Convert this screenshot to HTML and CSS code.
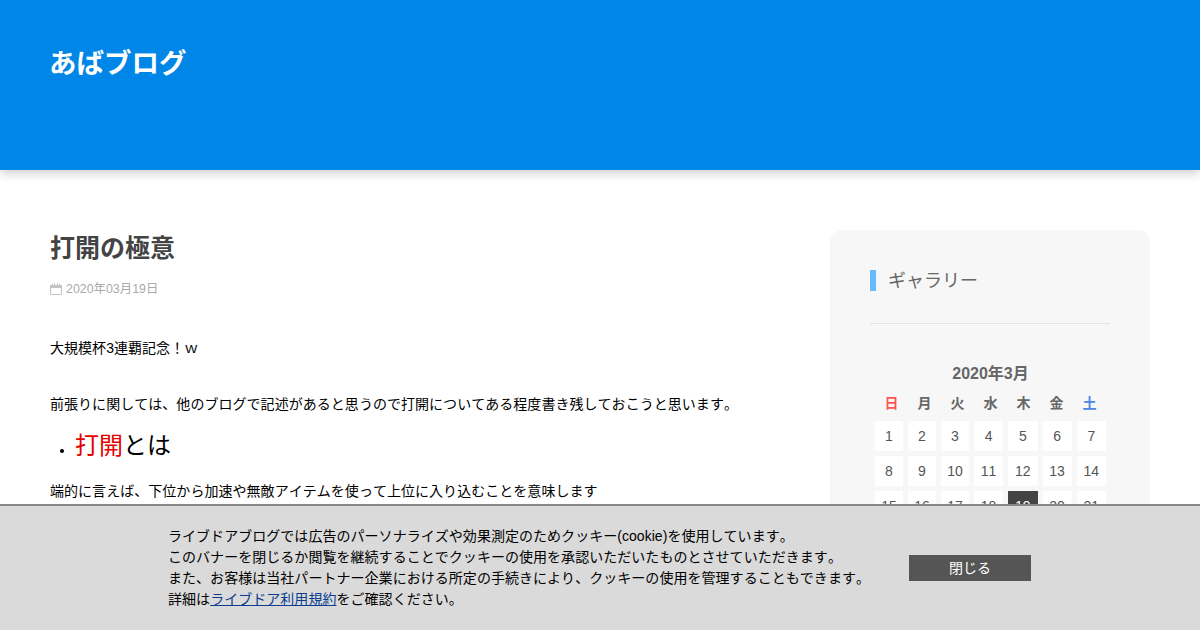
FILE: index.html
```html
<!DOCTYPE html>
<html lang="ja">
<head>
    <meta charset="UTF-8">
    <meta name="viewport" content="width=device-width, initial-scale=1.0">
    <title>あばブログ</title>
    <link rel="stylesheet" href="styles.css">
</head>
<body>
    <header class="site-header">
        <h1 class="site-title">あばブログ</h1>
    </header>

    <div class="content">
        <main class="article">
            <h2 class="article-title">打開の極意</h2>
            <div class="article-date">
                <svg class="date-icon" width="12" height="12" viewBox="0 0 12 12">
                    <path d="M0.5 2.5h11v9h-11z" fill="none" stroke="#c4c4c4"/>
                    <path d="M0 2h12v3H0z" fill="#c4c4c4"/>
                    <path d="M2.5 0.5v2M4.5 0.5v2M7.5 0.5v2M9.5 0.5v2" stroke="#c4c4c4"/>
                </svg>
                <span>2020年03月19日</span>
            </div>
            <div class="article-body">
                <p class="lead">大規模杯3連覇記念！ｗ</p>
                <p>前張りに関しては、他のブログで記述があると思うので打開についてある程度書き残しておこうと思います。</p>
                <ul class="topic-list">
                    <li><span class="red">打開</span>とは</li>
                </ul>
                <p>端的に言えば、下位から加速や無敵アイテムを使って上位に入り込むことを意味します</p>
            </div>
        </main>

        <aside class="sidebar">
            <div class="widget-head">
                <h3 class="widget-title">ギャラリー</h3>
            </div>
            <table class="calendar">
                <caption>2020年3月</caption>
                <thead>
                    <tr>
                        <th colspan="7">
                            <div class="weekdays">
                                <span class="sun">日</span><span>月</span><span>火</span><span>水</span><span>木</span><span>金</span><span class="sat">土</span>
                            </div>
                        </th>
                    </tr>
                </thead>
                <tbody>
                    <tr><td class="narrow">1</td><td class="narrow">2</td><td class="narrow">3</td><td>4</td><td>5</td><td>6</td><td>7</td></tr>
                    <tr><td>8</td><td>9</td><td>10</td><td>11</td><td>12</td><td>13</td><td>14</td></tr>
                    <tr><td>15</td><td>16</td><td>17</td><td>18</td><td class="today">19</td><td>20</td><td>21</td></tr>
                    <tr><td>22</td><td>23</td><td>24</td><td>25</td><td>26</td><td>27</td><td>28</td></tr>
                </tbody>
            </table>
        </aside>
    </div>

    <div class="cookie-banner">
        <div class="cookie-inner">
            <p class="cookie-text">
                ライブドアブログでは広告のパーソナライズや効果測定のためクッキー(cookie)を使用しています。<br>
                このバナーを閉じるか閲覧を継続することでクッキーの使用を承認いただいたものとさせていただきます。<br>
                また、お客様は当社パートナー企業における所定の手続きにより、クッキーの使用を管理することもできます。<br>
                詳細は<a href="#">ライブドア利用規約</a>をご確認ください。
            </p>
            <button class="cookie-close" type="button">閉じる</button>
        </div>
    </div>
</body>
</html>
```

FILE: styles.css
```css
html, body {
    height: 630px;
    overflow: hidden;
}
body {
    font-family: "Liberation Sans", "Noto Sans CJK JP", sans-serif;
    margin: 0;
    padding: 0;
    background-color: #ffffff;
    color: #000;
    font-size: 14px;
    font-kerning: none;
    text-spacing-trim: space-all;
}
.site-header {
    height: 170px;
    box-sizing: border-box;
    padding: 46px 49px 0;
    background-color: #0086e6;
    box-shadow: 0 3px 10px rgba(0, 0, 0, 0.2);
}
.site-title {
    margin: 0;
    font-size: 27.5px;
    line-height: 36px;
    font-weight: bold;
    color: #fff;
}
.content {
    display: flex;
    justify-content: space-between;
    align-items: flex-start;
    padding: 60px 50px 0;
}
.article {
    width: 730px;
}
.article-title {
    margin: 0;
    font-size: 25px;
    line-height: 36px;
    font-weight: bold;
    color: #444;
}
.article-date {
    display: flex;
    align-items: center;
    gap: 4px;
    margin-top: 14px;
    font-size: 12.4px;
    line-height: 18px;
    color: #aaa;
}
.article-body {
    margin-top: 38px;
    line-height: 24px;
}
.article-body p {
    margin: 0;
    letter-spacing: 0.04px;
}
.article-body .lead {
    margin-bottom: 32px;
}
.topic-list {
    margin: 12px 0 15px;
    padding: 0;
    list-style: none;
    font-size: 24px;
    line-height: 36px;
}
.topic-list li::before {
    content: "";
    display: inline-block;
    width: 4px;
    height: 4px;
    margin: 0 11px 0 10px;
    border-radius: 50%;
    background-color: #000;
    vertical-align: 1px;
}
.red {
    color: #e60000;
}
.sidebar {
    width: 320px;
    box-sizing: border-box;
    padding: 40px;
    background-color: #f7f7f7;
    border-radius: 12px;
}
.widget-head {
    padding-bottom: 32px;
    border-bottom: 1px solid #e3e3e3;
}
.widget-title {
    height: 21px;
    margin: 0;
    padding-left: 12px;
    border-left: 6px solid #66bbff;
    font-size: 18px;
    font-weight: normal;
    line-height: 23px;
    color: #666;
}
.calendar {
    width: 100%;
    margin-top: 40px;
    border-collapse: separate;
    border-spacing: 5px;
    color: #555;
}
.calendar caption {
    padding: 1px 0 2px;
    font-size: 16px;
    line-height: 18px;
    font-weight: bold;
    color: #666;
}
.calendar th {
    padding: 0;
}
.weekdays {
    display: grid;
    grid-template-columns: repeat(7, 33px);
    justify-content: center;
    font-size: 14px;
    line-height: 26px;
    color: #666;
}
.weekdays .sun {
    color: #f55;
}
.weekdays .sat {
    color: #4a86e8;
}
.calendar td {
    height: 30px;
    padding: 0;
    background-color: #fff;
    text-align: center;
    font-size: 14px;
}
.calendar td.narrow {
    width: 28px;
}
.calendar .today {
    background-color: #444;
    color: #fff;
}
.cookie-banner {
    position: fixed;
    left: 0;
    right: 0;
    bottom: 0;
    height: 126px;
    box-sizing: border-box;
    border-top: 2px solid #888;
    background-color: #dadada;
    display: flex;
    align-items: center;
    justify-content: center;
}
.cookie-inner {
    width: 862px;
    display: flex;
    align-items: center;
    justify-content: space-between;
}
.cookie-text {
    margin: 0 0 0 -1px;
    font-size: 14px;
    line-height: 21px;
    letter-spacing: 0.04px;
    color: #000;
}
.cookie-text a {
    color: #0b3d91;
}
.cookie-close {
    width: 122px;
    height: 26px;
    padding: 0 0 3px;
    border: none;
    background-color: #555;
    color: #fff;
    font-family: inherit;
    font-size: 14px;
}
```
